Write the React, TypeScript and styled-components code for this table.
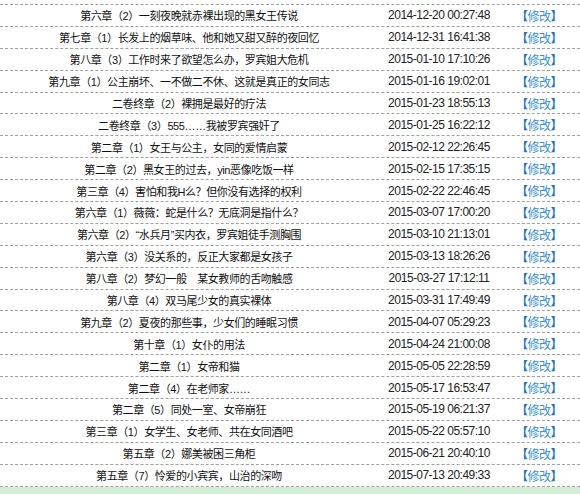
import React from "react";
import styled, { createGlobalStyle } from "styled-components";

const Global = createGlobalStyle`
  html, body { margin: 0; padding: 0; background: #fff; overflow: hidden; }
  body { font-family: "Liberation Sans", "Noto Sans CJK SC", sans-serif; }
`;

const Page = styled.div`
  width: 580px;
  height: 494px;
  overflow: hidden;
  display: flex;
  flex-direction: column;
`;

const TopSpacer = styled.div`
  height: 4px;
  flex: none;
`;

const List = styled.div`
  display: flex;
  flex-direction: column;
  border-bottom: 1px dashed #a0a0a0;
`;

const Row = styled.div`
  display: grid;
  grid-template-columns: 378px 122px 1fr;
  align-items: center;
  height: 20.9px;
  border-top: 1px dashed #a0a0a0;
`;

const Title = styled.div`
  text-align: center;
  font-family: "Liberation Sans", "Noto Sans CJK SC", sans-serif;
  font-size: 11px;
  letter-spacing: -0.4px;
  color: #111;
  white-space: nowrap;
`;

const DateCell = styled.div`
  text-align: center;
  font-family: "Liberation Sans", sans-serif;
  font-size: 12px;
  letter-spacing: -0.5px;
  color: #222;
  white-space: nowrap;
`;

const Action = styled.a`
  justify-self: center;
  font-family: "Liberation Sans", "Noto Sans CJK SC", sans-serif;
  font-size: 12px;
  letter-spacing: -0.5px;
  color: #3a8fcc;
  text-decoration: none;
  white-space: nowrap;
  padding-right: 2px;
`;

const Bracket = styled.span`
  color: #1f73b8;
  font-weight: bold;
`;

const Footer = styled.div`
  flex: 1;
  background: #d3efd3;
`;

const rows: [string, string][] = [
  ["第六章（2）一刻夜晚就赤裸出现的黑女王传说", "2014-12-20 00:27:48"],
  ["第七章（1）长发上的烟草味、他和她又甜又醉的夜回忆", "2014-12-31 16:41:38"],
  ["第八章（3）工作时来了欲望怎么办，罗宾姐大危机", "2015-01-10 17:10:26"],
  ["第九章（1）公主崩坏、一不做二不休、这就是真正的女同志", "2015-01-16 19:02:01"],
  ["二卷终章（2）裸拥是最好的疗法", "2015-01-23 18:55:13"],
  ["二卷终章（3）555……我被罗宾强奸了", "2015-01-25 16:22:12"],
  ["第二章（1）女王与公主，女同的爱情启蒙", "2015-02-12 22:26:45"],
  ["第二章（2）黑女王的过去，yin恶像吃饭一样", "2015-02-15 17:35:15"],
  ["第三章（4）害怕和我H么？但你没有选择的权利", "2015-02-22 22:46:45"],
  ["第六章（1）薇薇：蛇是什么？无底洞是指什么？", "2015-03-07 17:00:20"],
  ["第六章（2）“水兵月”买内衣，罗宾姐徒手测胸围", "2015-03-10 21:13:01"],
  ["第六章（3）没关系的，反正大家都是女孩子", "2015-03-13 18:26:26"],
  ["第八章（2）梦幻一般　某女教师的舌吻触感", "2015-03-27 17:12:11"],
  ["第八章（4）双马尾少女的真实裸体", "2015-03-31 17:49:49"],
  ["第九章（2）夏夜的那些事，少女们的睡眠习惯", "2015-04-07 05:29:23"],
  ["第十章（1）女仆的用法", "2015-04-24 21:00:08"],
  ["第二章（1）女帝和猫", "2015-05-05 22:28:59"],
  ["第二章（4）在老师家……", "2015-05-17 16:53:47"],
  ["第二章（5）同处一室、女帝崩狂", "2015-05-19 06:21:37"],
  ["第三章（1）女学生、女老师、共在女同酒吧", "2015-05-22 05:57:10"],
  ["第五章（2）娜美被困三角柜", "2015-06-21 20:40:10"],
  ["第五章（7）怜爱的小宾宾，山治的深吻", "2015-07-13 20:49:33"],
];

export default function App() {
  return (
    <Page>
      <Global />
      <TopSpacer />
      <List>
        {rows.map(([title, date]) => (
          <Row key={date}>
            <Title>{title}</Title>
            <DateCell>{date}</DateCell>
            <Action href="#">
              <Bracket>【</Bracket>修改<Bracket>】</Bracket>
            </Action>
          </Row>
        ))}
      </List>
      <Footer />
    </Page>
  );
}
